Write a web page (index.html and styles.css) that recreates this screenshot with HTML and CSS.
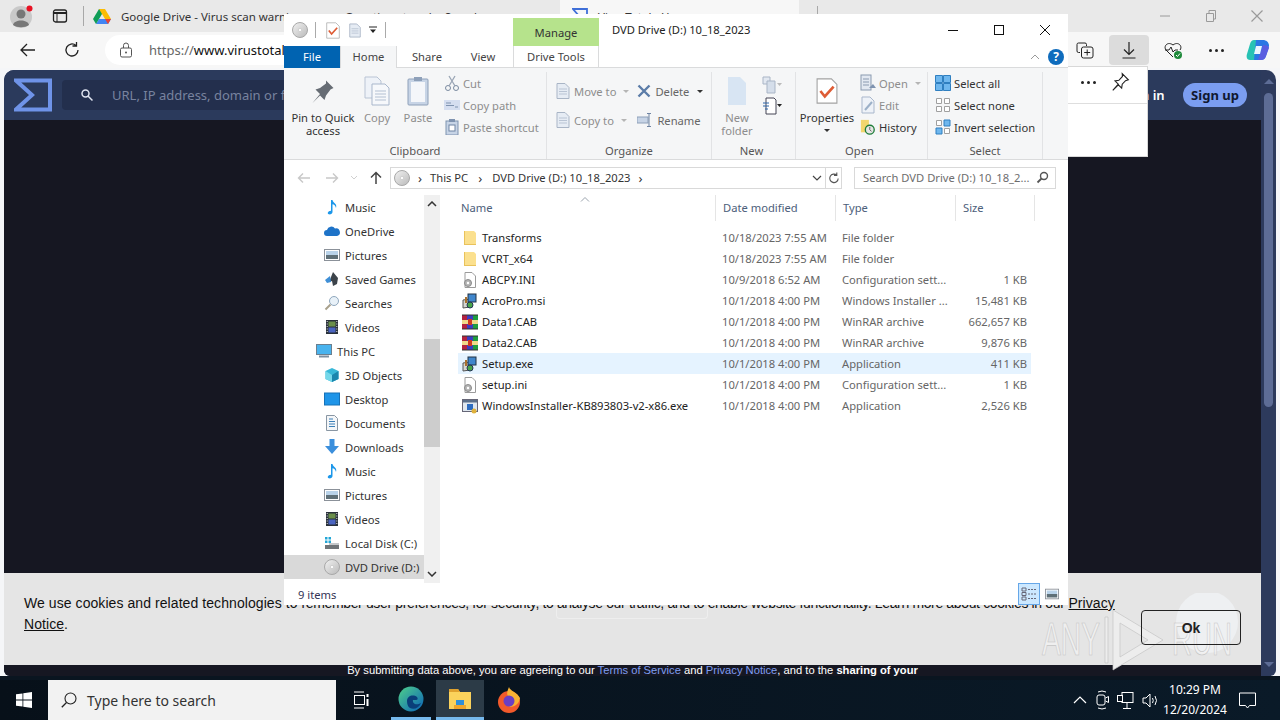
FILE: index.html
```html
<!DOCTYPE html>
<html lang="en">
<head>
	<meta charset="UTF-8">
	<title>DVD Drive (D:) 10_18_2023</title>
	<link rel="stylesheet" href="styles.css">
</head>
<body>
<svg class="defs" width="0" height="0">
	<defs>
		<linearGradient id="discfill" x1="0" y1="0" x2="1" y2="1"><stop offset="0" stop-color="#f2f2f2"/><stop offset="1" stop-color="#b9b9b9"/></linearGradient>
		<symbol id="disc" viewBox="0 0 16 16"><circle cx="8" cy="8" r="7.5" fill="url(#discfill)" stroke="#a8a8a8"/><circle cx="8" cy="8" r="1.6" fill="#fff" stroke="#bbb" stroke-width=".5"/></symbol>
		<symbol id="folder" viewBox="0 0 16 16"><path d="M2 1h10l2 2v12H2z" fill="#fbe08e"/><path d="M2 1h1v14H2zM2 14h12v1H2z" fill="#e9c25b"/></symbol>
		<symbol id="ini" viewBox="0 0 16 16"><path d="M3 .5h7l3.500 3.500v11.500H3z" fill="#fff" stroke="#9b9b9b"/><circle cx="6" cy="11" r="3.500" fill="#b5b5b5" stroke="#8a8a8a"/><circle cx="6" cy="11" r="1.200" fill="#fff"/></symbol>
		<symbol id="msi" viewBox="0 0 16 16"><path d="M1 7l7-1v8l-7 1z" fill="#d5d5cf" stroke="#555"/><rect x="6" y="1" width="8" height="8" fill="#3f86cc" stroke="#234"/><rect x="3" y="4" width="2" height="6" fill="#a9702c"/><circle cx="8" cy="12" r="3" fill="#48a548" stroke="#235"/></symbol>
		<symbol id="rar" viewBox="0 0 16 16"><rect x="0" y="1" width="5" height="14" fill="#b3213f"/><rect x="5" y="1" width="6" height="14" fill="#3c3cc0"/><rect x="11" y="1" width="5" height="14" fill="#1f9c3f"/><rect y="6" width="16" height="4" fill="#f0d98a"/><rect x="6" y="5" width="4" height="6" fill="#d0391f"/><path d="M0 1h16M0 15h16" stroke="#333"/></symbol>
		<symbol id="setup" viewBox="0 0 16 16"><rect x=".5" y="1.500" width="15" height="12" fill="#dfe7ef" stroke="#667"/><rect x="1" y="2" width="14" height="2.500" fill="#5b6f8a"/><rect x="5" y="6" width="6" height="6" fill="#2d6cc0"/><circle cx="12" cy="13" r="2.500" fill="#e0b23c"/></symbol>
		<symbol id="music" viewBox="0 0 16 16"><path d="M7 1h1.500c.5 3 5 3.500 3.500 8-.5-2.500-2-3.500-3.500-3.800V13c0 1.700-2 2.700-3.700 2.300C3 14.800 3.500 12 7 11.700z" fill="#1c97ea"/></symbol>
		<symbol id="cloud" viewBox="0 0 16 16"><path d="M3 13a3 3 0 0 1 0-6 4.500 4.500 0 0 1 8-1.500A3.800 3.800 0 0 1 13 13z" fill="#1e73c8"/></symbol>
		<symbol id="pics" viewBox="0 0 16 16"><rect x=".5" y="2.500" width="15" height="11" fill="#fff" stroke="#8b9199"/><rect x="2" y="4" width="12" height="4" fill="#b9d3ea"/><rect x="2" y="8" width="12" height="4" fill="#5f7078"/></symbol>
		<symbol id="games" viewBox="0 0 16 16"><path d="M9 1l5 6-1 6-4 2-1-5-3 1z" fill="#3c434a"/><path d="M1 9l5-4 1 6-4 1z" fill="#3f8fd6"/></symbol>
		<symbol id="find" viewBox="0 0 16 16"><circle cx="10" cy="6" r="4.500" fill="#e8f1f8" stroke="#8fa7bd"/><path d="M6.500 9.500L1.500 14.500" stroke="#a8a08c" stroke-width="2"/></symbol>
		<symbol id="video" viewBox="0 0 16 16"><rect x="2" y="1" width="12" height="14" fill="#29303a"/><rect x="4.500" y="2.500" width="7" height="5" fill="#6b8f4a"/><rect x="4.500" y="8.500" width="7" height="5" fill="#4a64c0"/><path d="M3.200 2v12M12.800 2v12" stroke="#ddd" stroke-dasharray="1 1.500"/></symbol>
		<symbol id="pc" viewBox="0 0 16 16"><rect x=".5" y="1.500" width="15" height="10" fill="#49b3ee" stroke="#6b7f8f"/><path d="M3 13.500h10" stroke="#7c8fa0" stroke-width="2"/></symbol>
		<symbol id="cube" viewBox="0 0 16 16"><path d="M8 1l6.500 3v8L8 15l-6.500-3V4z" fill="#38b8d8"/><path d="M8 8l6.500-4v8L8 15z" fill="#1b86ad"/><path d="M1.500 4L8 8v7l-6.500-3z" fill="#75d8ea"/></symbol>
		<symbol id="desk" viewBox="0 0 16 16"><rect x=".5" y="2" width="15" height="12" fill="#1f95e8" stroke="#1672b8"/></symbol>
		<symbol id="docs" viewBox="0 0 16 16"><path d="M2.500.5h8l3 3v12h-11z" fill="#f4f6f8" stroke="#8996a3"/><path d="M5 4h4M5 6.500h6M5 9h6M5 11.500h6" stroke="#3b7fb8"/></symbol>
		<symbol id="down" viewBox="0 0 16 16"><path d="M5.500 0h5v7H15l-7 8-7-8h4.500z" fill="#3b8fdc"/></symbol>
		<symbol id="disk" viewBox="0 0 16 16"><rect x="1" y="10" width="14" height="4" fill="#6f7478"/><rect x="5" y="8" width="10" height="2" fill="#c5c8cb"/><path d="M1 2h2.500v2.500H1zM4.500 2H7v2.500H4.500zM1 5.500h2.500V8H1zM4.500 5.500H7V8H4.500z" fill="#22a6d6"/></symbol>
		<symbol id="pin" viewBox="0 0 16 16"><path d="M10 1l5 5-2 1-3 4-1 3-3-3-5 5 5-6-3-3 3-1 4-3z" fill="#666c74"/></symbol>
		<symbol id="checkdoc" viewBox="0 0 20 24"><path d="M1 1h13l5 5v17H1z" fill="#fff" stroke="#a3a3a3"/><path d="M4 12l4 5 8-9" fill="none" stroke="#de5c35" stroke-width="2.400"/></symbol>
		<symbol id="grid" viewBox="0 0 16 16"><path d="M.5.500h7v7h-7zM8.500.500h7v7h-7zM.5 8.500h7v7h-7zM8.500 8.500h7v7h-7z" fill="#6fb7ee" stroke="#2f7fc0"/></symbol>
		<symbol id="gridnone" viewBox="0 0 16 16"><path d="M1.500 1.500h5v5h-5zM9.500 1.500h5v5h-5zM1.500 9.500h5v5h-5zM9.500 9.500h5v5h-5z" fill="#fff" stroke="#a0a0a0"/></symbol>
		<symbol id="gridinv" viewBox="0 0 16 16"><path d="M1.500 1.500h5v5h-5zM9.500 9.500h5v5h-5z" fill="#fff" stroke="#a0a0a0"/><path d="M9 1h6v6H9zM1 9h6v6H1z" fill="#6fb7ee" stroke="#2f7fc0"/></symbol>
		<symbol id="sheet" viewBox="0 0 16 16"><path d="M2 .5h8l4 4v11H2z" fill="#e6ecf4" stroke="#a9b5c6"/><path d="M4 6h8M4 8.500h8M4 11h8" stroke="#b9c4d4"/></symbol>
	</defs>
</svg>

<div class="desktop">
	<div class="browser">
		<div class="tabbar">
			<div class="avatar"><svg width="24" height="24" viewBox="0 0 24 24"><circle cx="11" cy="13" r="11" fill="#c9c9c9"/><circle cx="11" cy="10" r="4.500" fill="#777"/><path d="M3 21c1-6 15-6 16 0-4 3-12 3-16 0z" fill="#777"/><circle cx="19.500" cy="4.500" r="3" fill="#e81123"/></svg></div>
			<svg class="tabicon" width="16" height="16" viewBox="0 0 16 16"><rect x="1.500" y="2" width="13" height="12" rx="2" fill="none" stroke="#222" stroke-width="1.300"/><path d="M1.500 5h13" stroke="#222" stroke-width="2"/><path d="M5 5v9" stroke="#222"/></svg>
			<span class="tabsep"></span>
			<div class="tab tab-drive">
				<svg width="18" height="16" viewBox="0 0 18 16"><path d="M6 1h6l-6 10H0z" fill="#0f9d58"/><path d="M6 1h6l6 10h-6z" fill="#fbbc04"/><path d="M3 16l3-5h12l-3 5z" fill="#4285f4"/><path d="M0 11h6l-3 5z" fill="#0f9d58"/><path d="M12 11h6l-3 5z" fill="#ea4335"/></svg>
				<span>Google Drive - Virus scan warning</span>
			</div>
			<div class="tab tab-search"><span>Questions to ask - Search</span></div>
			<div class="tab tab-active"><svg width="16" height="16" viewBox="0 0 16 16"><path d="M1 1h14v14H1l6-7z" fill="none" stroke="#3f6fd8" stroke-width="1.800"/></svg><span>VirusTotal - Home</span></div>
			<span class="tabsep tabsep-last"></span>
			<div class="wincontrols">
				<svg width="14" height="14" viewBox="0 0 14 14"><path d="M2 7h10" stroke="#9a9a9a"/></svg>
				<svg width="14" height="14" viewBox="0 0 14 14"><path d="M2.500 4.500h7v8h-7zM5 4V1.500h6.500V10H10" fill="none" stroke="#9a9a9a"/></svg>
				<svg width="14" height="14" viewBox="0 0 14 14"><path d="M1.500 1.500l11 11M12.500 1.500l-11 11" stroke="#9a9a9a" stroke-width="1.200"/></svg>
			</div>
		</div>
		<div class="toolbar">
			<svg class="navbtn" width="18" height="18" viewBox="0 0 18 18"><path d="M16 9H2M8 3L2 9l6 6" fill="none" stroke="#222" stroke-width="1.300"/></svg>
			<svg class="navbtn" width="18" height="18" viewBox="0 0 18 18"><path d="M15 9a6 6 0 1 1-2-4.500M13.500 1v4h-4" fill="none" stroke="#222" stroke-width="1.300"/></svg>
			<div class="urlbar">
				<svg width="14" height="16" viewBox="0 0 14 16"><rect x="1.500" y="6" width="11" height="9" rx="1.500" fill="none" stroke="#555"/><path d="M4.500 6V3.500a2.500 2.500 0 0 1 5 0V6" fill="none" stroke="#555"/><circle cx="7" cy="10.500" r="1" fill="#555"/></svg>
				<span class="urlscheme">https://</span><span class="urlhost">www.virustotal.com/gui/home/upload</span>
			</div>
			<div class="toolicons">
				<svg width="20" height="20" viewBox="0 0 20 20"><path d="M5 12.500H3.500A1.500 1.500 0 0 1 2 11V4.500A1.500 1.500 0 0 1 3.500 3H10a1.500 1.500 0 0 1 1.500 1.500V6" fill="none" stroke="#222"/><rect x="6.500" y="7" width="11.500" height="11" rx="2" fill="none" stroke="#222"/><path d="M12.200 9.500v6M9.200 12.500h6" stroke="#222"/></svg>
				<div class="dlbtn"><svg width="20" height="20" viewBox="0 0 20 20"><path d="M10 2v12M5 9.500l5 5 5-5M3.500 18h13" fill="none" stroke="#222" stroke-width="1.200"/></svg></div>
				<svg width="20" height="20" viewBox="0 0 20 20"><path d="M10 17L3 10C0 6 5 1 10 5c5-4 10 1 7 5" fill="none" stroke="#222"/><path d="M2 10h4l2-3 2 5 2-2h3" fill="none" stroke="#222"/><circle cx="15" cy="15" r="4" fill="#1f8a3b"/><path d="M13 15l1.500 1.500 2.500-3" fill="none" stroke="#fff"/></svg>
				<div class="dots"><i></i><i></i><i></i></div>
				<svg class="copilot" width="24" height="24" viewBox="0 0 24 24"><path d="M8 2h6l-4 20H4C1 22 0 19 1 16L4 6c1-3 2-4 4-4z" fill="#27c2b4"/><path d="M10 2h7c3 0 6 2 6 6l-3 10c-1 3-3 4-5 4H8z" fill="#2a78e4"/><path d="M17 7c3 0 6 1 6 3l-3 8c-1 3-3 4-5 4h-3z" fill="#5a5ee0"/><path d="M10 8h6l-2 8H8z" fill="#eaf6ff"/></svg>
			</div>
		</div>
		<div class="page">
			<div class="page-main">
				<div class="page-head">
					<svg class="vtlogo" width="38" height="34" viewBox="0 0 38 34"><path d="M2 2.500h34v29H2l16-14.500z" fill="none" stroke="#6f93e8" stroke-width="4"/></svg>
					<div class="vtsearch">
						<svg width="14" height="14" viewBox="0 0 14 14"><circle cx="5.500" cy="5.500" r="3.500" fill="none" stroke="#dfe4f0" stroke-width="1.500"/><path d="M8 8l4.500 4.500" stroke="#dfe4f0" stroke-width="1.500"/></svg>
						<span>URL, IP address, domain or file hash</span>
					</div>
					<a class="signin">Sign in</a>
					<a class="signup">Sign up</a>
				</div>
				<div class="page-body"></div>
				<div class="cookie">
					<p>We use cookies and related technologies to <span class="squeeze">remember user preferences, for security, to analyse our traffic, and to enable website functionality. Learn more about cookies in our</span> <u>Privacy Notice</u>.</p>
					<span class="ghostbox"></span>
					<svg class="watermark" width="210" height="90" viewBox="0 0 210 90">
						<circle cx="173" cy="29" r="31" fill="#eef0f2"/>
						<text x="8" y="62" textLength="58" lengthAdjust="spacingAndGlyphs" class="wmtext">ANY</text>
						<path class="wmshape" d="M79 17l50 30-50 30zM86 30v34l28-17z" fill-rule="evenodd"/>
						<path class="wmshape" d="M71 24h3v46h-3z"/>
						<text x="138" y="62" textLength="60" lengthAdjust="spacingAndGlyphs" class="wmtext">RUN</text>
					</svg>
					<button class="okbtn">Ok</button>
				</div>
				<div class="legal">By submitting data above, you are agreeing to our <a>Terms of Service</a> and <a>Privacy Notice</a>, and to the <b>sharing of your</b></div>
			</div>
			<div class="page-scroll">
				<span class="arrow-up"></span>
				<span class="thumb"></span>
				<span class="arrow-down"></span>
			</div>
		</div>
	</div>

	<div class="flyout">
		<div class="flyout-top">
			<div class="dots"><i></i><i></i><i></i></div>
			<svg width="20" height="20" viewBox="0 0 18 18"><path d="M11 1.500l5.500 5.500-2.500.8-3 3.200-.5 3.500-3-3-5 5 5-5.500-3-3 3.500-.5L11.200 4z" fill="none" stroke="#222"/></svg>
		</div>
	</div>

	<div class="explorer">
		<div class="ex-title">
			<div class="qat">
				<svg width="16" height="16"><use href="#disc"/></svg>
				<span class="qatsep qatsep-first"></span>
				<svg width="14" height="17"><use href="#checkdoc"/></svg>
				<svg class="qatpage" width="14" height="17"><use href="#sheet"/></svg>
				<svg class="qatcaret" width="8" height="8" viewBox="0 0 8 8"><path d="M0 1h8" stroke="#222"/><path d="M1 3.500h6L4 7z" fill="#222"/></svg>
				<span class="qatsep"></span>
			</div>
			<div class="manage">Manage</div>
			<div class="ex-name">DVD Drive (D:) 10_18_2023</div>
			<div class="ex-controls">
				<svg width="12" height="12" viewBox="0 0 12 12"><path d="M1 6.500h10" stroke="#111"/></svg>
				<svg width="12" height="12" viewBox="0 0 12 12"><rect x="1.500" y="1.500" width="9" height="9" fill="none" stroke="#111"/></svg>
				<svg width="12" height="12" viewBox="0 0 12 12"><path d="M1 1l10 10M11 1L1 11" stroke="#111"/></svg>
			</div>
		</div>
		<div class="ex-tabs">
			<span class="rtab rtab-file">File</span>
			<span class="rtab rtab-home">Home</span>
			<span class="rtab rtab-share">Share</span>
			<span class="rtab rtab-view">View</span>
			<span class="rtab rtab-drive">Drive Tools</span>
			<div class="ex-help">
				<svg width="10" height="6" viewBox="0 0 10 6"><path d="M1 5l4-4 4 4" fill="none" stroke="#9a9a9a"/></svg>
				<span class="helpdot">?</span>
			</div>
		</div>
		<div class="ribbon">
			<div class="group g-clip">
				<div class="group-body">
					<div class="big b-pin"><svg width="24" height="24"><use href="#pin"/></svg><span>Pin to Quick access</span></div>
					<div class="big b-copy off"><svg width="26" height="30" viewBox="0 0 26 30"><path d="M1 1h12l4 4v17H1z" fill="#eef2f8" stroke="#b9c4d4"/><path d="M8 8h13l4 4v17H8z" fill="#f6f8fb" stroke="#a9b7cc"/><path d="M11 15h11M11 18h11M11 21h11M11 24h11" stroke="#b3c0d2"/></svg><span>Copy</span></div>
					<div class="big b-paste off"><svg width="22" height="30" viewBox="0 0 22 30"><rect x="1" y="3" width="20" height="26" rx="1" fill="#c7d4e6" stroke="#8ea0b9"/><rect x="4" y="6" width="14" height="20" fill="#f4f6fa"/><rect x="7" y="1" width="8" height="4" fill="#8ea0b9"/></svg><span>Paste</span></div>
					<div class="smalls">
						<div class="small off"><svg width="16" height="16" viewBox="0 0 16 16"><circle cx="4" cy="13" r="2.500" fill="none" stroke="#7a8aa0"/><circle cx="12" cy="13" r="2.500" fill="none" stroke="#7a8aa0"/><path d="M5 11L11 1M11 11L5 1" stroke="#9aa5b5" stroke-width="1.300"/></svg><span>Cut</span></div>
						<div class="small off"><svg width="16" height="16" viewBox="0 0 16 16"><rect y="3" width="16" height="10" fill="#d5def0"/><path d="M2 6h5M2 8.500h8M11 10h3" stroke="#7f93b0"/></svg><span>Copy path</span></div>
						<div class="small off"><svg width="16" height="16" viewBox="0 0 16 16"><rect x="2" y="2" width="12" height="14" fill="#c7d4e6" stroke="#7f93b0"/><rect x="5" y="6" width="6" height="6" fill="#fff" stroke="#6f84a3"/><rect x="5" y="0" width="6" height="3" fill="#7f93b0"/></svg><span>Paste shortcut</span></div>
					</div>
				</div>
				<label>Clipboard</label>
			</div>
			<div class="group g-org">
				<div class="group-body">
					<div class="orgcol">
						<div class="small off"><svg width="16" height="18"><use href="#sheet"/></svg><span>Move to</span><em class="caret caret-off"></em></div>
						<div class="small off"><svg width="16" height="18"><use href="#sheet"/></svg><span>Copy to</span><em class="caret caret-off"></em></div>
					</div>
					<div class="orgcol">
						<div class="small s-dim"><svg width="14" height="14" viewBox="0 0 14 14"><path d="M1.500 1.500l11 11M12.500 1.500l-11 11" stroke="#5b7ca8" stroke-width="2.400"/></svg><span>Delete</span><em class="caret"></em></div>
						<div class="small s-dim off"><svg width="16" height="14" viewBox="0 0 16 14"><rect y="4" width="11" height="6" fill="#c7d4e6" stroke="#8ea0b9"/><path d="M12 0v14M10 .5h4M10 13.500h4" stroke="#6f84a3"/></svg><span>Rename</span></div>
					</div>
				</div>
				<label>Organize</label>
			</div>
			<div class="group g-new">
				<div class="group-body">
					<div class="big b-new off"><svg width="20" height="30" viewBox="0 0 20 30"><path d="M1 1h12l6 6v22H1z" fill="#d8e5f3"/></svg><span>New folder</span></div>
					<div class="newcol">
						<svg width="20" height="18" viewBox="0 0 20 18"><path d="M1 1h7v7H1z" fill="#e2e8f1" stroke="#a9b5c6"/><path d="M5 5h8v12H5z" fill="#d5deea" stroke="#a9b5c6"/><path d="M15 7h5l-2.500 3z" fill="#bbb"/></svg>
						<svg width="20" height="18" viewBox="0 0 20 18"><path d="M4 1h8l2 2v14H4z" fill="#fff" stroke="#445"/><path d="M1 6h6M1 9h6M3 12h3" stroke="#2a64a8"/><path d="M15 7h5l-2.500 3z" fill="#222"/></svg>
					</div>
				</div>
				<label>New</label>
			</div>
			<div class="group g-open">
				<div class="group-body">
					<div class="big b-props"><svg width="22" height="30"><use href="#checkdoc"/></svg><span>Properties</span><em class="caret"></em></div>
					<div class="smalls">
						<div class="small off"><svg width="16" height="18" viewBox="0 0 16 18"><rect x="1" y="1" width="10" height="15" fill="#e2e8f1" stroke="#8a9ab0"/><path d="M3 5h6M3 8h6M3 11h6" stroke="#8a9ab0"/><path d="M9 14l4-4 3 4z" fill="#7f93b0"/></svg><span>Open</span><em class="caret caret-off"></em></div>
						<div class="small off"><svg width="16" height="18" viewBox="0 0 16 18"><path d="M2 1h8l4 4v12H2z" fill="#eef2f8" stroke="#a9b7cc"/><path d="M5 14l7-8" stroke="#9cb0c8" stroke-width="2"/></svg><span>Edit</span></div>
						<div class="small"><svg width="16" height="16" viewBox="0 0 18 18"><path d="M1 1h9v14H1z" fill="#f2d66e"/><circle cx="11" cy="12" r="5" fill="#e6e6e6" stroke="#1e7d39" stroke-width="1.500"/><path d="M11 9v3l2 2" fill="none" stroke="#555"/></svg><span>History</span></div>
					</div>
				</div>
				<label>Open</label>
			</div>
			<div class="group g-sel">
				<div class="group-body">
					<div class="smalls">
						<div class="small"><svg width="16" height="16"><use href="#grid"/></svg><span>Select all</span></div>
						<div class="small"><svg width="16" height="16"><use href="#gridnone"/></svg><span>Select none</span></div>
						<div class="small"><svg width="16" height="16"><use href="#gridinv"/></svg><span>Invert selection</span></div>
					</div>
				</div>
				<label>Select</label>
			</div>
		</div>
		<div class="addr">
			<div class="addr-nav">
				<svg width="14" height="12" viewBox="0 0 14 12"><path d="M13 6H2M6 1.500L1.500 6 6 10.500" fill="none" stroke="#c8c8c8" stroke-width="1.400"/></svg>
				<svg width="14" height="12" viewBox="0 0 14 12"><path d="M1 6h11M8 1.500L12.500 6 8 10.500" fill="none" stroke="#c8c8c8" stroke-width="1.400"/></svg>
				<svg class="nudge" width="8" height="6" viewBox="0 0 8 6"><path d="M1 1l3 3 3-3" fill="none" stroke="#d0d0d0"/></svg>
				<svg class="nudge" width="14" height="14" viewBox="0 0 14 14"><path d="M7 13V2M2 6.500L7 1.500l5 5" fill="none" stroke="#444" stroke-width="1.500"/></svg>
			</div>
			<div class="addr-box">
				<svg width="16" height="16"><use href="#disc"/></svg>
				<b class="chev">›</b><span>This PC</span><b class="chev chev-wide">›</b><span>DVD Drive (D:) 10_18_2023</span><b class="chev">›</b>
				<div class="addr-end">
					<svg width="10" height="6" viewBox="0 0 10 6"><path d="M1 1l4 4 4-4" fill="none" stroke="#444" stroke-width="1.200"/></svg>
					<svg class="refresh" width="16" height="20" viewBox="0 0 16 20"><path d="M13 10.500a4.500 4.500 0 1 1-1.500-3.500M11.500 4v3.200H8.500" fill="none" stroke="#555" stroke-width="1.200"/></svg>
				</div>
			</div>
			<div class="addr-search">
				<span>Search DVD Drive (D:) 10_18_2...</span>
				<svg width="13" height="13" viewBox="0 0 13 13"><circle cx="8" cy="5" r="3.500" fill="none" stroke="#555" stroke-width="1.400"/><path d="M5.500 7.500L1.500 11.500" stroke="#555" stroke-width="1.800"/></svg>
			</div>
		</div>
		<div class="ex-main">
			<div class="nav">
				<div class="nav-list">
					<div class="nv"><svg width="16" height="16"><use href="#music"/></svg><span>Music</span></div>
					<div class="nv"><svg width="16" height="16"><use href="#cloud"/></svg><span>OneDrive</span></div>
					<div class="nv"><svg width="16" height="16"><use href="#pics"/></svg><span>Pictures</span></div>
					<div class="nv"><svg width="16" height="16"><use href="#games"/></svg><span>Saved Games</span></div>
					<div class="nv"><svg width="16" height="16"><use href="#find"/></svg><span>Searches</span></div>
					<div class="nv"><svg width="16" height="16"><use href="#video"/></svg><span>Videos</span></div>
					<div class="nv nv-top"><svg width="16" height="16"><use href="#pc"/></svg><span>This PC</span></div>
					<div class="nv"><svg width="16" height="16"><use href="#cube"/></svg><span>3D Objects</span></div>
					<div class="nv"><svg width="16" height="16"><use href="#desk"/></svg><span>Desktop</span></div>
					<div class="nv"><svg width="16" height="16"><use href="#docs"/></svg><span>Documents</span></div>
					<div class="nv"><svg width="16" height="16"><use href="#down"/></svg><span>Downloads</span></div>
					<div class="nv"><svg width="16" height="16"><use href="#music"/></svg><span>Music</span></div>
					<div class="nv"><svg width="16" height="16"><use href="#pics"/></svg><span>Pictures</span></div>
					<div class="nv"><svg width="16" height="16"><use href="#video"/></svg><span>Videos</span></div>
					<div class="nv"><svg width="16" height="16"><use href="#disk"/></svg><span>Local Disk (C:)</span></div>
					<div class="nv nv-sel"><svg width="16" height="16"><use href="#disc"/></svg><span>DVD Drive (D:)</span></div>
				</div>
				<div class="nav-scroll">
					<svg width="10" height="6" viewBox="0 0 10 6"><path d="M1 5l4-4 4 4" fill="none" stroke="#333" stroke-width="1.500"/></svg>
					<span class="nav-thumb"></span>
					<svg width="10" height="6" viewBox="0 0 10 6"><path d="M1 1l4 4 4-4" fill="none" stroke="#333" stroke-width="1.500"/></svg>
				</div>
			</div>
			<div class="files">
				<div class="fhead">
					<span class="sortmark"><svg width="10" height="5" viewBox="0 0 10 5"><path d="M1 4.500l4-4 4 4" fill="none" stroke="#9aa3ad"/></svg></span>
					<span class="fh fh-name">Name</span>
					<span class="fh">Date modified</span>
					<span class="fh">Type</span>
					<span class="fh fh-size">Size</span>
				</div>
				<div class="frow"><span class="fname"><svg width="16" height="16"><use href="#folder"/></svg>Transforms</span><span>10/18/2023 7:55 AM</span><span>File folder</span><span></span></div>
				<div class="frow"><span class="fname"><svg width="16" height="16"><use href="#folder"/></svg>VCRT_x64</span><span>10/18/2023 7:55 AM</span><span>File folder</span><span></span></div>
				<div class="frow"><span class="fname"><svg width="16" height="16"><use href="#ini"/></svg>ABCPY.INI</span><span>10/9/2018 6:52 AM</span><span>Configuration sett...</span><span class="fsize">1 KB</span></div>
				<div class="frow"><span class="fname"><svg width="16" height="16"><use href="#msi"/></svg>AcroPro.msi</span><span>10/1/2018 4:00 PM</span><span>Windows Installer ...</span><span class="fsize">15,481 KB</span></div>
				<div class="frow"><span class="fname"><svg width="16" height="16"><use href="#rar"/></svg>Data1.CAB</span><span>10/1/2018 4:00 PM</span><span>WinRAR archive</span><span class="fsize">662,657 KB</span></div>
				<div class="frow"><span class="fname"><svg width="16" height="16"><use href="#rar"/></svg>Data2.CAB</span><span>10/1/2018 4:00 PM</span><span>WinRAR archive</span><span class="fsize">9,876 KB</span></div>
				<div class="frow frow-sel"><span class="fname"><svg width="16" height="16"><use href="#msi"/></svg>Setup.exe</span><span>10/1/2018 4:00 PM</span><span>Application</span><span class="fsize">411 KB</span></div>
				<div class="frow"><span class="fname"><svg width="16" height="16"><use href="#ini"/></svg>setup.ini</span><span>10/1/2018 4:00 PM</span><span>Configuration sett...</span><span class="fsize">1 KB</span></div>
				<div class="frow"><span class="fname"><svg width="16" height="16"><use href="#setup"/></svg>WindowsInstaller-KB893803-v2-x86.exe</span><span>10/1/2018 4:00 PM</span><span>Application</span><span class="fsize">2,526 KB</span></div>
			</div>
		</div>
		<div class="status">
			<span>9 items</span>
			<div class="viewbtns">
				<span class="vb vb-on"><svg width="16" height="16" viewBox="0 0 16 16"><path d="M1 2h4v3H1zM1 6.500h4v3H1zM1 11h4v3H1z" fill="none" stroke="#667"/><path d="M7 3.500h8M7 8h8M7 12.500h8" stroke="#667" stroke-dasharray="2 1"/></svg></span>
				<span class="vb vb-off"><svg width="14" height="14"><use href="#pics"/></svg></span>
			</div>
		</div>
	</div>

	<div class="taskbar">
		<div class="start"><svg width="16" height="16" viewBox="0 0 16 16"><path d="M0 2.300l6.500-.9v6.200H0zM7.300 1.300L16 0v7.600H7.300zM0 8.400h6.500v6.200L0 13.700zM7.300 8.400H16V16l-8.700-1.200z" fill="#fff"/></svg></div>
		<div class="tsearch">
			<svg width="16" height="16" viewBox="0 0 16 16"><circle cx="9.500" cy="6.500" r="5.500" fill="none" stroke="#222" stroke-width="1.100"/><path d="M5.500 10.500L.8 15.200" stroke="#222" stroke-width="1.300"/></svg>
			<span>Type here to search</span>
		</div>
		<div class="tapps">
			<div class="tapp tapp-view"><svg width="16" height="18" viewBox="0 0 16 18"><path d="M1 1h10M1 17h10" stroke="#fff"/><rect x="1.500" y="4.500" width="10" height="9" fill="none" stroke="#fff"/><rect x="13.500" y="3" width="2" height="3" fill="#fff"/><rect x="13.500" y="8" width="2" height="7" fill="#fff"/></svg></div>
			<div class="tapp tapp-edge"><svg width="26" height="26" viewBox="0 0 26 26"><defs><linearGradient id="edg" x1="0" y1="0" x2="1" y2="1"><stop offset="0" stop-color="#4fd08a"/><stop offset="1" stop-color="#0b63b8"/></linearGradient></defs><circle cx="13" cy="13" r="12.500" fill="url(#edg)"/><path d="M9 15c0-5 6-7 10-4 1 1 1 3-1 3h-3c-1 3 3 6 8 3-2 5-7 7-11 5-2-1-3-4-3-7z" fill="#0a3f7a"/></svg></div>
			<div class="tapp tapp-files"><svg width="24" height="22" viewBox="0 0 24 22"><path d="M1 1h9l2 3h11v17H1z" fill="#fbd25c"/><path d="M1 1h9l2 3H1z" fill="#e0a12e"/><rect x="8" y="12" width="8" height="5" fill="#2f8fd8"/><rect x="6" y="17" width="12" height="4" fill="#f0a52a"/></svg></div>
			<div class="tapp tapp-fox"><svg width="24" height="26" viewBox="0 0 24 26"><circle cx="12" cy="15" r="11" fill="#f25a2b"/><path d="M12 0c1 4 8 5 11 11-1 8-8 9-11 9 5-3 4-10-1-11C9 6 11 3 12 0z" fill="#f9b233"/><circle cx="12" cy="14" r="5.500" fill="#6b3fc4"/></svg></div>
		</div>
		<div class="tray">
			<svg width="14" height="8" viewBox="0 0 14 8"><path d="M1 7l6-6 6 6" fill="none" stroke="#fff" stroke-width="1.200"/></svg>
			<svg width="14" height="20" viewBox="0 0 14 20"><path d="M3 2q4-2 8 0M3 18q4 2 8 0" fill="none" stroke="#fff"/><rect x="2" y="5" width="8" height="10" rx="2" fill="none" stroke="#fff"/><path d="M10.500 8l3-1.500v6l-3-1.500" fill="none" stroke="#fff"/></svg>
			<svg width="17" height="17" viewBox="0 0 17 17"><rect x="5" y=".5" width="11" height="10" fill="none" stroke="#fff"/><rect x=".5" y="3.500" width="5" height="6" fill="#0a1520" stroke="#fff"/><path d="M10 11v5M6 16.500h8" stroke="#fff"/></svg>
			<svg width="17" height="17" viewBox="0 0 17 17"><path d="M1 6h3l4-4v13l-4-4H1z" fill="none" stroke="#fff"/><path d="M10.500 6q1.500 2.500 0 5M13 4q3 4.500 0 9" fill="none" stroke="#fff"/></svg>
			<div class="clock"><span>10:29 PM</span><span>12/20/2024</span></div>
			<svg class="notif" width="17" height="17" viewBox="0 0 17 17"><path d="M.5 1h16v12.500h-6L8.500 16 6.500 13.500h-6z" fill="none" stroke="#fff"/></svg>
		</div>
	</div>
</div>
</body>
</html>
```

FILE: styles.css
```css
*{
	padding: 0;
	margin: 0;
	box-sizing: border-box;
}
body{
	font-family: "Noto Sans", "Liberation Sans", sans-serif;
	background: #0a1520;
	overflow: hidden;
}
.defs{
	position: absolute;
}
.desktop{
	position: relative;
	width: 1280px;
	height: 720px;
	display: flex;
	flex-direction: column;
	overflow: hidden;
}

/* browser behind the explorer window */
.browser{
	flex: 1;
	display: flex;
	flex-direction: column;
	background: #f5f6f8;
	min-height: 0;
}
.tabbar{
	height: 32px;
	background: #e9e9e9;
	display: flex;
	align-items: center;
	padding-left: 10px;
	font-size: 11.5px;
	color: #333;
	white-space: nowrap;
}
.avatar{
	width: 24px;
	height: 24px;
}
.tabicon{
	margin-left: 18px;
}
.tabsep{
	width: 1px;
	height: 20px;
	background: #a8a8a8;
	margin-left: 15px;
}
.tab{
	display: flex;
	align-items: center;
	gap: 10px;
	height: 32px;
	overflow: hidden;
}
.tab-drive{
	margin-left: 9px;
	width: 252px;
}
.tab-search{
	width: 215px;
}
.tab-active{
	width: 239px;
	background: #f7f7f7;
	padding-left: 12px;
}
.tabsep-last{
	margin-left: 18px;
}
.wincontrols{
	margin-left: auto;
	display: flex;
	gap: 32px;
	padding-right: 16px;
}
.toolbar{
	height: 36px;
	background: #f7f7f7;
	display: flex;
	align-items: center;
	padding-left: 19px;
	gap: 26px;
}
.urlbar{
	margin-left: -2px;
	width: 600px;
	height: 30px;
	background: #fff;
	border-radius: 15px;
	display: flex;
	align-items: center;
	padding-left: 14px;
	font-size: 13px;
	white-space: nowrap;
	overflow: hidden;
}
.urlscheme{
	margin-left: 16px;
	color: #666;
}
.urlhost{
	color: #111;
}
.toolicons{
	margin-left: auto;
	display: flex;
	align-items: center;
	gap: 24px;
	padding-right: 10px;
}
.dlbtn{
	width: 40px;
	height: 30px;
	margin: 0 -10px;
	background: #dcdcdc;
	border-radius: 4px;
	display: flex;
	align-items: center;
	justify-content: center;
}
.dots{
	display: flex;
	gap: 3px;
}
.dots i{
	width: 3px;
	height: 3px;
	background: #222;
	border-radius: 50%;
}
.toolicons .dots{
	margin-left: 2px;
	margin-right: -2px;
}
.page{
	height: 606px;
	margin: 2px 4px 0;
	display: flex;
	background: #2d3a5c;
	border-radius: 10px 10px 6px 6px;
	overflow: hidden;
}
.page-main{
	flex: 1;
	display: flex;
	flex-direction: column;
	min-width: 0;
}
.page-head{
	height: 50px;
	display: flex;
	align-items: center;
	padding-left: 10px;
	background: #2b3a5c;
	color: #fff;
}
.vtsearch{
	margin-left: 10px;
	width: 1000px;
	height: 30px;
	background: #232f4d;
	border-radius: 4px;
	display: flex;
	align-items: center;
	padding-left: 18px;
	gap: 18px;
	font-size: 13px;
	color: #78839f;
}
.signin{
	margin-left: 60px;
	font-size: 13px;
	font-weight: 600;
	white-space: nowrap;
}
.signup{
	position: absolute;
	left: 1183px;
	top: 83px;
	width: 64px;
	height: 24px;
	line-height: 24px;
	text-align: center;
	border-radius: 12px;
	background: #7b9df0;
	color: #10182f;
	font-size: 13px;
	font-weight: 700;
}
.page-body{
	flex: 1;
	background: #161722;
}
.cookie{
	position: relative;
	height: 92px;
	background: #e5e5e5;
	padding: 20px 140px 0 20px;
	font-family: "Liberation Sans", sans-serif;
	font-size: 14px;
	line-height: 21px;
	letter-spacing: .07px;
	color: #111;
}
.squeeze{
	letter-spacing: -.36px;
}
.okbtn{
	position: absolute;
	left: 1137px;
	top: 37px;
	width: 100px;
	height: 35px;
	background: transparent;
	border: 1px solid #222;
	border-radius: 4px;
	font: 700 14px "Liberation Sans", sans-serif;
	color: #222;
}
.ghostbox{
	position: absolute;
	left: 552px;
	top: 34px;
	width: 152px;
	height: 12px;
	border: 1px solid #eeeeee;
	border-top: 0;
	border-radius: 0 0 4px 4px;
}
.watermark{
	position: absolute;
	left: 1030px;
	top: 20px;
}
.wmtext{
	font: 400 46px "Liberation Sans", sans-serif;
	fill: #f4f4f4;
	fill-opacity: .7;
	stroke: #c4c4c4;
	stroke-width: .7px;
}
.wmshape{
	fill: #ededed;
	stroke: #c4c4c4;
	stroke-width: .7px;
}
.legal{
	height: 11px;
	background: #161722;
	color: #fff;
	font-family: "Liberation Sans", sans-serif;
	font-size: 11.2px;
	line-height: 11px;
	text-align: center;
	white-space: nowrap;
	overflow: hidden;
}
.legal a{
	color: #7f9df0;
}
.page-scroll{
	position: relative;
	width: 15px;
}
.thumb{
	position: absolute;
	left: 3px;
	top: 23px;
	width: 9px;
	height: 314px;
	background: #5d6c95;
	border-radius: 5px;
}
.arrow-up,.arrow-down{
	position: absolute;
	left: 3px;
	width: 0;
	height: 0;
	border-left: 5px solid transparent;
	border-right: 5px solid transparent;
}
.arrow-up{
	top: 9px;
	border-bottom: 5px solid #5d6c95;
}
.arrow-down{
	bottom: 9px;
	border-top: 5px solid #5d6c95;
}

/* download flyout */
.flyout{
	position: absolute;
	left: 1060px;
	top: 66px;
	width: 88px;
	height: 91px;
	background: #fff;
	border: 1px solid #d8d8d8;
}
.flyout-top{
	height: 37px;
	border-bottom: 1px solid #dedede;
	display: flex;
	align-items: center;
	padding: 0 0 6px 20px;
	gap: 14px;
}

/* explorer window */
.explorer{
	position: absolute;
	left: 284px;
	top: 14px;
	width: 784px;
	height: 591px;
	background: #fff;
	display: flex;
	flex-direction: column;
	font-size: 11.2px;
	color: #333;
	white-space: nowrap;
}
.ex-title{
	height: 32px;
	display: flex;
	color: #222;
}
.qat{
	width: 229px;
	display: flex;
	align-items: center;
	padding-left: 8px;
}
.qatsep{
	width: 1px;
	height: 16px;
	background: #aaa;
	margin-left: 7px;
}
.qatsep-first{
	margin-right: 10px;
}
.qatpage{
	margin-left: 8px;
}
.qatcaret{
	margin-left: 7px;
	margin-right: 1px;
}
.manage{
	width: 86px;
	height: 28px;
	margin-top: 4px;
	background: #b6e38c;
	text-align: center;
	line-height: 29px;
	color: #333;
}
.ex-name{
	margin-left: 13px;
	line-height: 31px;
}
.ex-controls{
	margin-left: auto;
	display: flex;
	align-items: center;
	gap: 34px;
	padding-right: 17px;
}
.ex-tabs{
	height: 22px;
	display: flex;
	border-bottom: 1px solid #dadbdc;
	color: #444;
}
.rtab{
	line-height: 22px;
	text-align: center;
}
.rtab-file{
	width: 56px;
	height: 22px;
	background: #0063b1;
	color: #fff;
}
.rtab-home{
	width: 57px;
	height: 22px;
	background: #f5f6f7;
	border: 1px solid #dadbdc;
	border-width: 0 1px;
}
.rtab-share{
	width: 60px;
}
.rtab-view{
	width: 56px;
	padding-right: 4px;
}
.rtab-drive{
	width: 86px;
	border: 1px solid #dadbdc;
	border-width: 0 1px;
}
.ex-help{
	margin-left: auto;
	display: flex;
	align-items: center;
	gap: 8px;
	padding-right: 4px;
}
.helpdot{
	width: 16px;
	height: 16px;
	border-radius: 50%;
	background: #0f6cbd;
	color: #fff;
	font-size: 12px;
	font-weight: 700;
	line-height: 16px;
	text-align: center;
}
.ribbon{
	height: 92px;
	background: #f5f6f7;
	border-bottom: 1px solid #dadbdc;
	display: flex;
}
.group{
	display: flex;
	flex-direction: column;
	border-right: 1px solid #e2e3e5;
	margin-top: 4px;
}
.g-clip{
	width: 263px;
}
.g-org{
	width: 165px;
}
.g-new{
	width: 84px;
}
.g-open{
	width: 132px;
}
.g-sel{
	width: 115px;
}
.group label{
	text-align: center;
	line-height: 16px;
	color: #555;
}
.g-new label,.g-open label{
	padding-right: 4px;
}
.group-body{
	flex: 1;
	display: flex;
	min-height: 0;
}
.big{
	display: flex;
	flex-direction: column;
	align-items: center;
	text-align: center;
	line-height: 13px;
	white-space: normal;
}
.big svg{
	height: 30px;
	margin: 4px 0 5px;
}
.big span{
	display: block;
}
.off{
	color: #8d8d8d;
}
.b-pin{
	width: 78px;
	padding: 0 4px;
}
.b-copy{
	width: 30px;
}
.b-paste{
	width: 52px;
}
.smalls{
	display: flex;
	flex-direction: column;
}
.small{
	display: flex;
	align-items: center;
	gap: 3px;
	height: 22px;
}
.small svg{
	flex: none;
}
.s-dim{
	color: #666;
	gap: 4px;
}
.caret{
	display: inline-block;
	width: 0;
	height: 0;
	margin-left: 4px;
	border-left: 3px solid transparent;
	border-right: 3px solid transparent;
	border-top: 3px solid #333;
}
.caret-off{
	border-top-color: #b5b5b5;
}
.orgcol{
	display: flex;
	flex-direction: column;
	gap: 7px;
	padding: 8px 0 0 8px;
	width: 84px;
}
.g-new .big{
	width: 50px;
}
.newcol{
	display: flex;
	flex-direction: column;
	gap: 3px;
	padding-top: 4px;
}
.b-props{
	width: 62px;
}
.b-props .caret{
	margin: 5px 0 0;
}
.g-open .smalls{
	margin-left: 2px;
}
.g-sel .smalls{
	padding-left: 7px;
}
.addr{
	height: 35px;
	display: flex;
	align-items: center;
	padding: 0 12px 0 13px;
	color: #333;
}
.addr-nav{
	width: 93px;
	display: flex;
	align-items: center;
	gap: 14px;
}
.nudge{
	margin-left: -3px;
}
.addr-box{
	width: 452px;
	height: 22px;
	border: 1px solid #d9d9d9;
	display: flex;
	align-items: center;
	padding-left: 3px;
}
.chev{
	width: 20px;
	text-align: center;
	font-weight: 400;
	font-size: 13px;
}
.chev-wide{
	width: 24px;
}
.addr-end{
	margin-left: auto;
	display: flex;
	align-items: center;
	gap: 3px;
	height: 20px;
}
.refresh{
	border-left: 1px solid #d9d9d9;
}
.addr-search{
	margin-left: 12px;
	width: 202px;
	height: 22px;
	border: 1px solid #d9d9d9;
	display: flex;
	align-items: center;
	justify-content: space-between;
	padding: 0 6px 0 8px;
	color: #6d6d6d;
}
.ex-main{
	flex: 1;
	display: flex;
	min-height: 0;
}
.nav{
	width: 156px;
	display: flex;
}
.nav-list{
	width: 140px;
	overflow: hidden;
}
.nv{
	height: 24px;
	display: flex;
	align-items: center;
	gap: 5px;
	padding-left: 40px;
	color: #333;
}
.nv-top{
	padding-left: 32px;
}
.nv-sel{
	background: #d9d9d9;
}
.nav-scroll{
	position: relative;
	width: 16px;
	background: #f0f0f0;
	height: 388px;
	display: flex;
	flex-direction: column;
	align-items: center;
	justify-content: space-between;
	padding: 6px 0;
}
.nav-thumb{
	position: absolute;
	left: 0;
	top: 144px;
	width: 16px;
	height: 108px;
	background: #cdcdcd;
}
.files{
	flex: 1;
	padding-left: 18px;
	position: relative;
}
.fhead{
	height: 32px;
	display: grid;
	grid-template-columns: 264px 120px 120px 73px;
	align-items: start;
	color: #4c607a;
}
.sortmark{
	position: absolute;
	left: 140px;
	top: 0;
	line-height: 5px;
}
.fh{
	height: 26px;
	line-height: 26px;
	padding-left: 7px;
	margin-left: -7px;
	border-left: 1px solid #e5e5e5;
}
.fh-name{
	border-left: 0;
	margin-left: 0;
	padding-left: 3px;
}
.fh-size{
	border-right: 1px solid #e5e5e5;
}
.frow{
	width: 573px;
	height: 21px;
	display: grid;
	grid-template-columns: 264px 120px 120px 69px;
	align-items: center;
	color: #666;
}
.frow-sel{
	background: #e5f3ff;
}
.fname{
	display: flex;
	align-items: center;
	gap: 4px;
	padding-left: 4px;
	color: #222;
}
.fsize{
	text-align: right;
	padding-right: 4px;
}
.status{
	height: 22px;
	display: flex;
	align-items: center;
	justify-content: space-between;
	padding-left: 14px;
	color: #335;
}
.viewbtns{
	display: flex;
	align-items: center;
	gap: 4px;
	padding-right: 8px;
}
.vb{
	width: 22px;
	height: 22px;
	display: flex;
	align-items: center;
	justify-content: center;
}
.vb-off{
	width: 16px;
}
.vb-on{
	background: #cce8ff;
	border: 1px solid #66a7e8;
}

/* taskbar */
.taskbar{
	height: 40px;
	margin-top: 4px;
	background: linear-gradient(90deg, #071019, #0a1a28);
	display: flex;
	align-items: stretch;
	color: #fff;
}
.start{
	width: 48px;
	display: flex;
	align-items: center;
	justify-content: center;
}
.tsearch{
	width: 288px;
	background: #f2f2f2;
	display: flex;
	align-items: center;
	gap: 10px;
	padding-left: 13px;
	font-size: 14px;
	color: #333;
}
.tapps{
	display: flex;
}
.tapp{
	display: flex;
	align-items: center;
	justify-content: center;
}
.tapp-view{
	width: 55px;
	padding-right: 6px;
}
.tapp-edge{
	width: 40px;
	margin-right: 5px;
	border-bottom: 3px solid #76b9ed;
}
.tapp-files{
	width: 48px;
	background: #2c3b47;
	border-bottom: 3px solid #76b9ed;
}
.tapp-fox{
	width: 49px;
}
.tray{
	margin-left: auto;
	display: flex;
	align-items: center;
	gap: 8px;
	padding-right: 24px;
}
.clock{
	display: flex;
	flex-direction: column;
	align-items: center;
	font-size: 12px;
	line-height: 20px;
	margin-left: -1px;
	width: 58px;
}
.notif{
	margin-left: 7px;
}
```
